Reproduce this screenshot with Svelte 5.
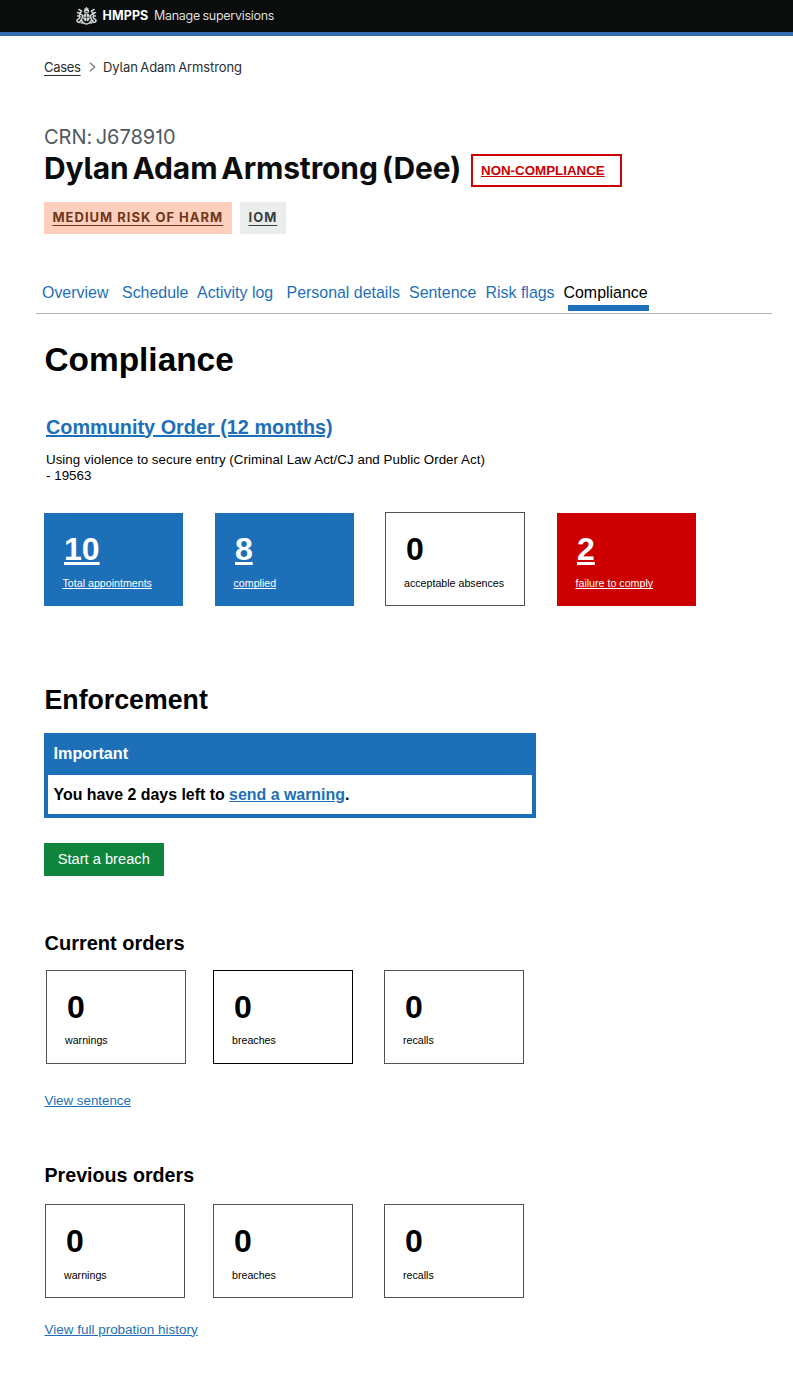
<script>
  const tabs = ['Overview', 'Schedule', 'Activity log', 'Personal details', 'Sentence', 'Risk flags', 'Compliance'];
  const compliance = [
    { value: '10', label: 'Total appointments', tone: 'blue' },
    { value: '8', label: 'complied', tone: 'blue' },
    { value: '0', label: 'acceptable absences', tone: 'plain' },
    { value: '2', label: 'failure to comply', tone: 'red' }
  ];
  const orders = [
    { value: '0', label: 'warnings' },
    { value: '0', label: 'breaches' },
    { value: '0', label: 'recalls' }
  ];
</script>

<header class="masthead">
  <svg class="crest" viewBox="0 0 42 36" width="21" height="18" aria-hidden="true">
    <g fill="none" stroke="#d4d7d7" stroke-width="3" stroke-linecap="round">
      <path d="M6 5l5 3-3 5 5 4-1 6-4 6M3 11l5 2M3 18c4-2 6 1 4 4s-5 2-5 5 3 4 6 4M10 26l4 4M8 14l-2 4" />
      <path d="M36 5l-5 3 3 5-5 4 1 6 4 6M39 11l-5 2M39 18c-4-2-6 1-4 4s5 2 5 5-3 4-6 4M32 26l-4 4M34 14l2 4" />
      <path d="M11 32c4-2 6 2 10 2s6-4 10-2" />
      <path d="M17 9c0-4 8-4 8 0M21 1.500v5M18 4l6 0" />
    </g>
    <ellipse cx="21" cy="20.500" rx="6.500" ry="8" fill="#d4d7d7" />
    <path d="M21 13v15M15 20.500h12" stroke="#0b0c0c" stroke-width="1.200" />
    <path d="M16.500 10.500h9" stroke="#e4e6e6" stroke-width="2" />
  </svg>
  <span class="org">HMPPS</span>
  <span class="service">Manage supervisions</span>
</header>

<main>
  <nav class="crumbs">
    <span class="crumb-link">Cases</span>
    <svg width="7" height="10" viewBox="0 0 7 10" aria-hidden="true"><path d="M1 .8l4.700 4.200L1 9.200" fill="none" stroke="#6f777b" stroke-width="1.200" /></svg>
    <span class="crumb-name">Dylan Adam Armstrong</span>
  </nav>

  <div class="crn">CRN: J678910</div>
  <div class="title-row">
    <div class="person">Dylan Adam Armstrong (Dee)</div>
    <span class="status"><u>NON-COMPLIANCE</u></span>
  </div>
  <div class="tags">
    <span class="tag risk"><span>MEDIUM RISK OF HARM</span></span>
    <span class="tag iom"><span>IOM</span></span>
  </div>

  <nav class="tabs">
    {#each tabs as tab}
      <span class:active={tab === 'Compliance'}>{tab}</span>
    {/each}
  </nav>

  <h1>Compliance</h1>
  <h3 class="order"><u>Community Order (12 months)</u></h3>
  <p class="offence">Using violence to secure entry (Criminal Law Act/CJ and Public Order Act)<br />- 19563</p>

  <div class="cards summary">
    {#each compliance as card}
      <div class="card {card.tone}">
        <strong>{card.value}</strong>
        <span>{card.label}</span>
      </div>
    {/each}
  </div>

  <h2>Enforcement</h2>
  <section class="banner">
    <div class="banner-title">Important</div>
    <div class="banner-body">You have 2 days left to <u>send a warning</u>.</div>
  </section>
  <button>Start a breach</button>

  <h3 class="current">Current orders</h3>
  <div class="cards current-cards">
    {#each orders as card}
      <div class="card plain" class:dark={card.label === 'breaches'}>
        <strong>{card.value}</strong>
        <span>{card.label}</span>
      </div>
    {/each}
  </div>
  <u class="more">View sentence</u>

  <h3 class="previous">Previous orders</h3>
  <div class="cards previous-cards">
    {#each orders as card}
      <div class="card plain">
        <strong>{card.value}</strong>
        <span>{card.label}</span>
      </div>
    {/each}
  </div>
  <u class="more history">View full probation history</u>
</main>

<style>
  :global(body) {
    background: #fff;
    color: #000;
    font-family: "Liberation Sans", Arial, sans-serif;
  }
  .masthead, .crumbs, .crn, .person, .tag {
    font-family: Inter, sans-serif;
    font-feature-settings: "cv05", "cv01";
    white-space: nowrap;
  }
  .masthead {
    box-sizing: border-box;
    height: 36px;
    padding-left: 76px;
    background: #0b0c0c;
    border-bottom: 4px solid #366bb0;
    display: flex;
    align-items: center;
    font-size: 12.5px;
    line-height: 16px;
    color: #dcdede;
  }
  .crest { margin: -1px 5.500px 0 0; }
  .org { width: 51.500px; font-weight: 700; letter-spacing: .1px; color: #fff; }
  .service { letter-spacing: -0.28px; word-spacing: -.7px; }

  main { padding: 21px 0 0 44px; display: flex; flex-direction: column; align-items: flex-start; }
  .crumbs { display: flex; align-items: center; height: 20px; font-size: 13px; line-height: 20px; color: #2b2d2e; }
  .crumb-link, .crumb-name { margin-top: -1px; }
  .crumb-link { width: 45px; letter-spacing: -0.3px; text-decoration: underline; text-underline-offset: 2.500px; text-decoration-thickness: 1px; }
  .crumb-name { margin-left: 7px; letter-spacing: -0.1px; word-spacing: -1px; }

  .crn { margin-top: 47px; height: 27px; line-height: 26px; font-size: 20px; letter-spacing: -0.05px; word-spacing: -2px; color: #505a5f; }
  .title-row { display: flex; height: 34px; }
  .person { width: 426.500px; font-size: 30px; font-weight: 700; line-height: 34px; letter-spacing: -0.13px; word-spacing: -3px; color: #0b0c0c; }
  .status {
    box-sizing: border-box; width: 151px; height: 33px; margin-top: 2.500px; padding-left: 8.500px;
    border: 2px solid #cc0000; color: #cc0000; font-size: 13.330px; font-weight: 700; line-height: 29px;
  }
  .tags { display: flex; gap: 8px; margin-top: 17px; height: 32px; }
  .tag { box-sizing: border-box; padding: 0 8.500px; font-size: 13px; font-weight: 700; line-height: 31px; letter-spacing: 1px; }
  .tag span { text-decoration: underline; text-decoration-thickness: 1px; text-underline-offset: 3px; }
  .risk { width: 188px; background: #fdcfbc; color: #6e3619; }
  .iom { width: 46px; background: #ebeded; color: #383f43; }

  .tabs {
    box-sizing: border-box; width: 736px; height: 31px; margin: 49px 0 0 -8px; padding-left: 6px;
    border-bottom: 1px solid #b1b4b6;
    display: grid; grid-template-columns: 80px 75px 89.500px 122.500px 76.500px 78px auto;
    font-size: 15.950px; line-height: 20px; color: #1d70b8; white-space: nowrap;
  }
  .active { position: relative; color: #000; }
  .active::after { content: ""; position: absolute; left: 4.500px; top: 22px; width: 81px; height: 6px; background: #1d70b8; }

  h1, h2, h3, p { margin: 0; font-weight: 700; }
  h1 { margin: 26px 0 0 .5px; font-size: 33.400px; line-height: 40px; }
  h2 { margin: 78px 0 0 .5px; font-size: 26.720px; line-height: 32px; }
  h3 { margin-left: .5px; font-size: 20px; line-height: 24px; }
  .order { margin: 34.500px 0 0 2px; color: #1d70b8; font-size: 19.850px; }
  .order u { text-decoration-thickness: 2px; }
  .offence { margin: 13.500px 0 0 2px; height: 32px; font-size: 13.330px; font-weight: 400; line-height: 15.500px; letter-spacing: .035px; }

  .cards { display: grid; height: 94px; }
  .summary { margin-top: 28px; grid-template-columns: 171px 170px 172px 140px; }
  .card { box-sizing: border-box; width: 140px; height: 94px; padding: 18px 0 0 18px; border: 1px solid transparent; }
  .card strong { display: block; margin: 0 0 8.500px 2px; font-size: 32px; line-height: 36px; }
  .card span { display: block; font-size: 10.670px; line-height: 14px; white-space: nowrap; }
  .plain { border-color: #505253; }
  .dark { border-color: #000; }
  .blue, .red { width: 139px; height: 92.500px; margin-top: 1px; padding: 18px 0 0 18.500px; border: 0; color: #fff; }
  .blue strong, .red strong { width: max-content; margin-left: 1.500px; text-decoration: underline; text-decoration-thickness: 3px; text-underline-offset: 2px; text-decoration-skip-ink: none; }
  .blue span, .red span { text-decoration: underline; text-decoration-skip-ink: none; }
  .blue { background: #1d70b8; }
  .red { background: #cc0000; }

  .banner { box-sizing: border-box; width: 491.500px; height: 85px; margin-top: 17px; border: 4px solid #1d70b8; border-top: 0; font-weight: 700; font-size: 15.920px; }
  .banner-title { height: 42px; padding-left: 5.500px; line-height: 41px; font-size: 16.200px; background: #1d70b8; color: #fff; }
  .banner-body { padding-left: 5.500px; line-height: 39px; }
  .banner u { color: #1d70b8; }
  button {
    width: 120px; height: 33px; margin: 25px 0 0; padding: 0 .5px 0 0; border: 0; background: #0f843c; color: #fff;
    font: 14.670px/33px "Liberation Sans", Arial, sans-serif;
  }

  .current { margin-top: 55px; }
  .current-cards, .previous-cards { grid-template-columns: 167px 171px 140px; }
  .current-cards { margin: 15px 0 0 2px; }
  .current-cards strong { margin-bottom: 7.500px; }
  .previous-cards { margin: 17px 0 0 1px; grid-template-columns: 168px 171px 140px; }
  .more { margin: 28.500px 0 0 .5px; font-size: 13.330px; line-height: 16px; color: #1d70b8; }
  .previous { margin-top: 54.500px; font-size: 19.650px; }
  .history { margin-top: 23.500px; font-size: 13.480px; }
</style>
